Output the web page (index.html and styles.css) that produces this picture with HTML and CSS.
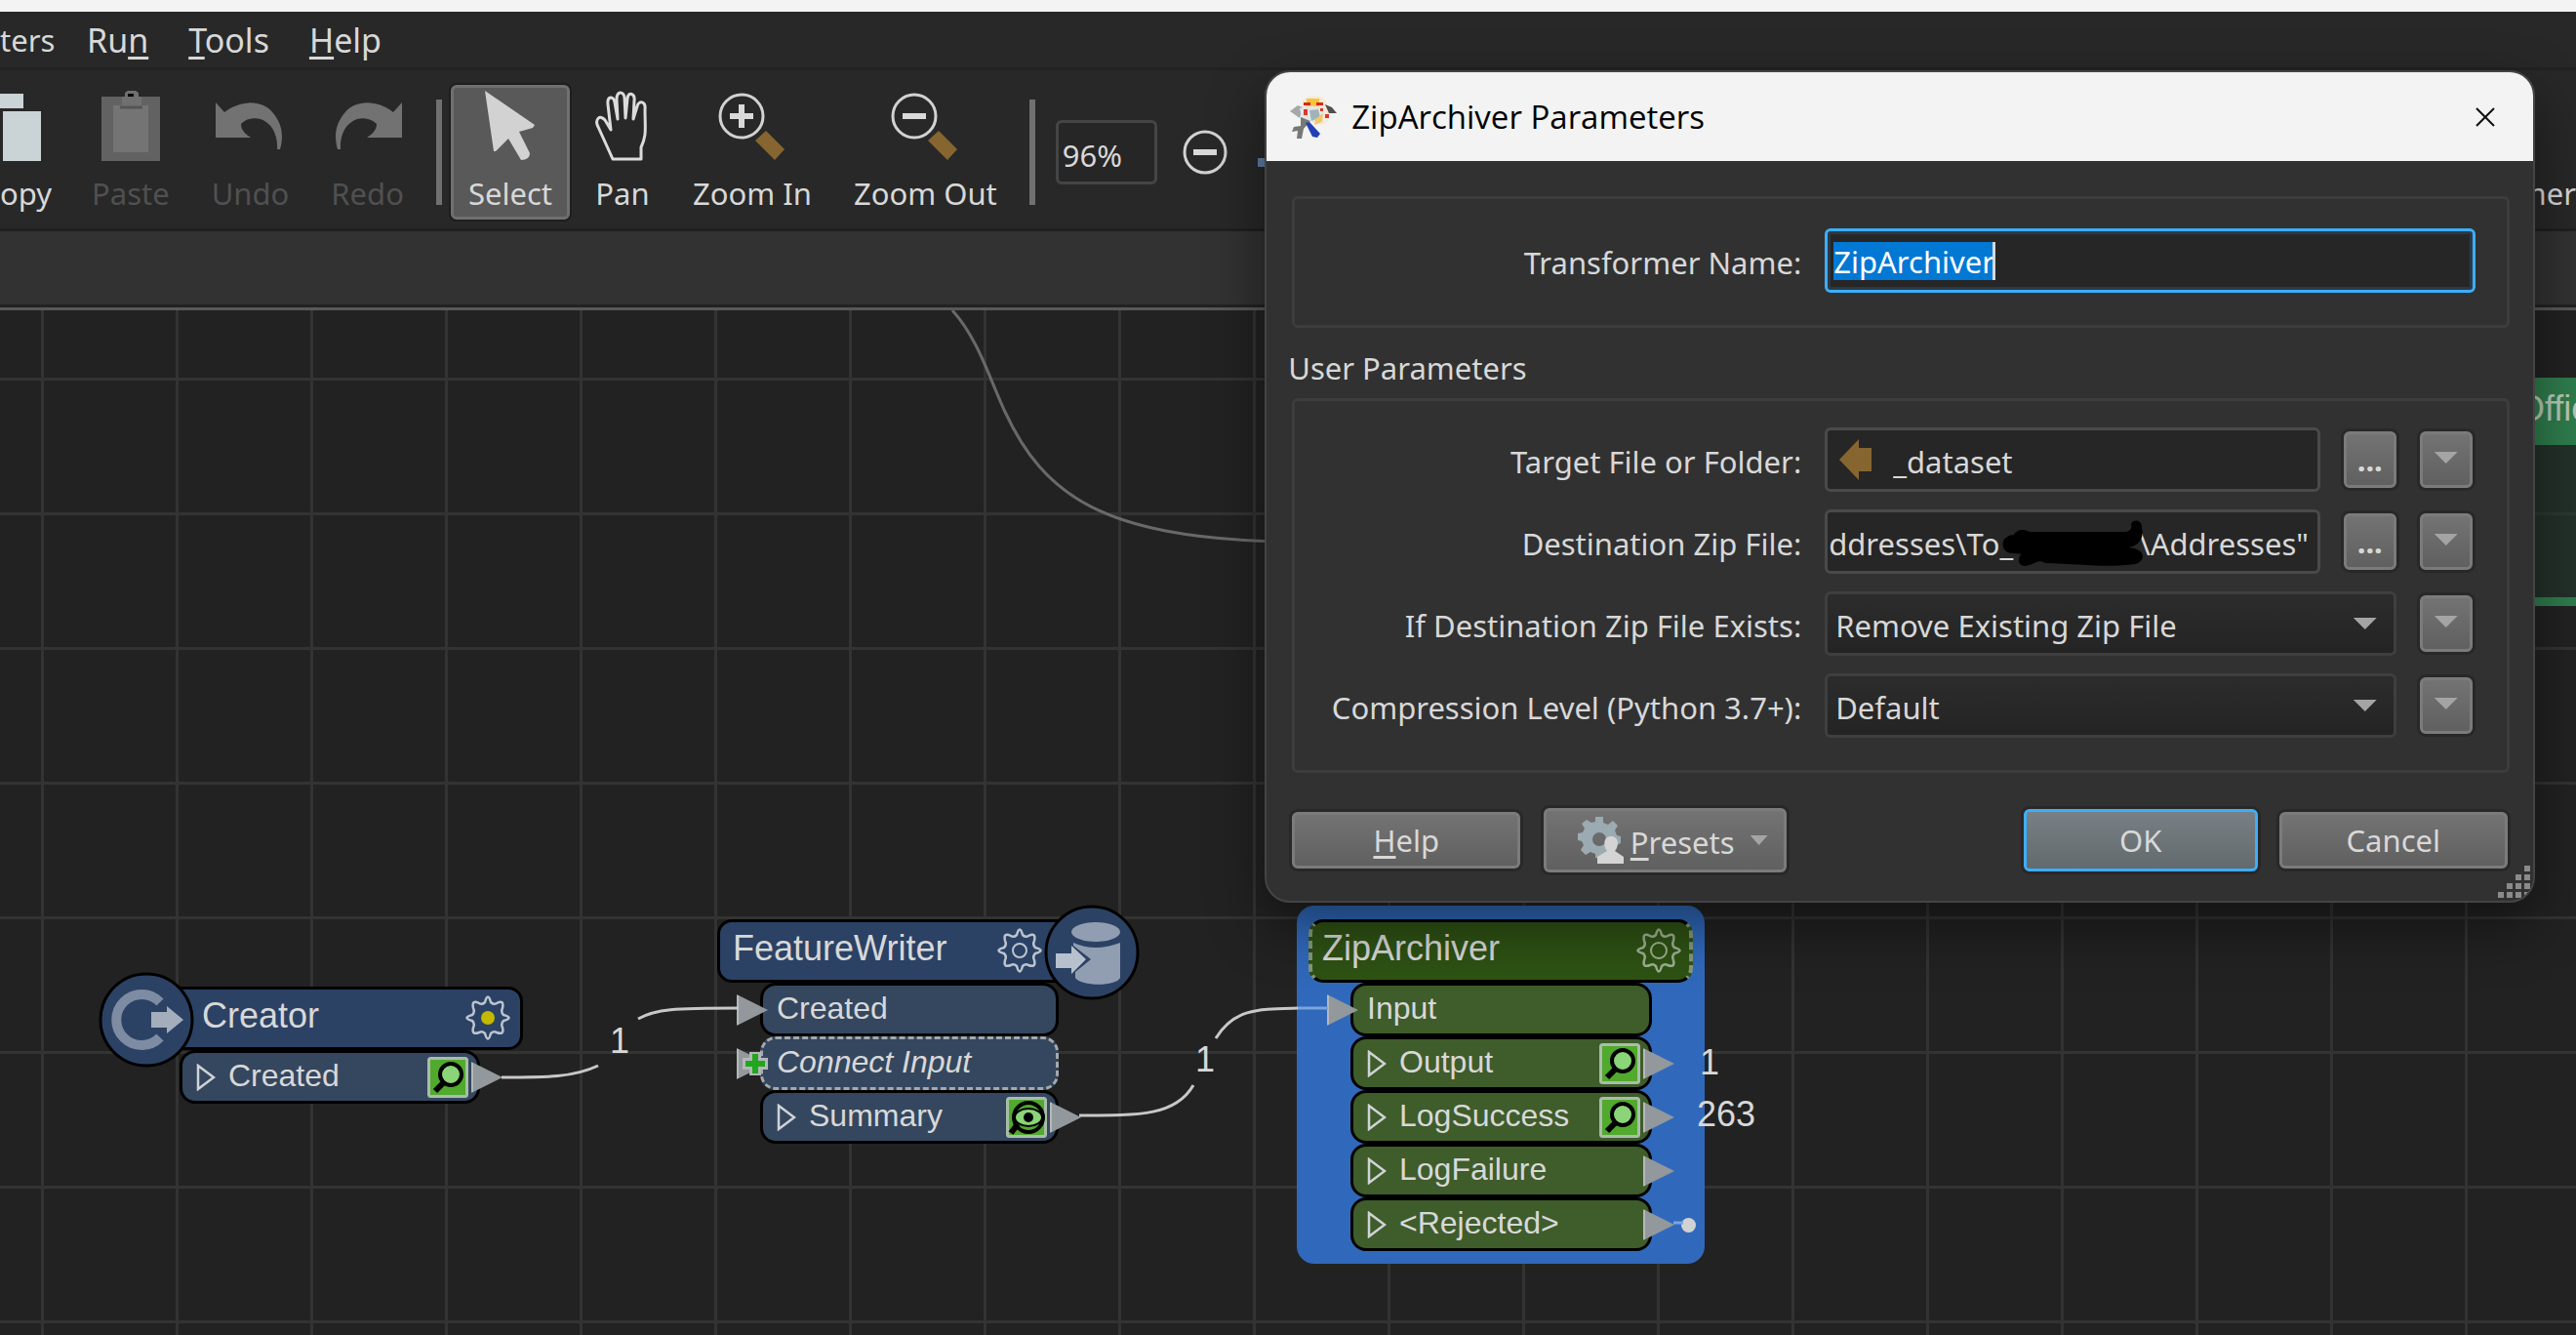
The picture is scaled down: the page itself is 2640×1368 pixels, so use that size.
FILE: index.html
```
<!DOCTYPE html>
<html lang="en">
<head>
<meta charset="UTF-8" />
<meta name="viewport" content="width=device-width, initial-scale=1" />
<title>ZipArchiver Parameters</title>
<link rel="stylesheet" href="styles.css">
</head>
<body>

<!-- shared icons -->
<svg class="sprite" aria-hidden="true">
  <symbol id="gear" viewBox="0 0 46 46">
    <path d="M20 7 Q23 -4 26 7 Q29 10 32 8 Q40 4 38 13 Q36 17 39 20 Q50 23 39 26 Q36 29 38 33 Q40 41 32 38 Q29 36 26 39 Q23 50 20 39 Q17 36 14 38 Q6 41 8 33 Q10 29 7 26 Q-4 23 7 20 Q10 17 8 13 Q6 4 14 8 Q17 10 20 7 Z" fill="none" stroke="currentColor" stroke-width="2.5" stroke-linejoin="round"/>
  </symbol>
  <symbol id="expand" viewBox="0 0 20 28">
    <path d="M2 2 L18 14 L2 26 Z" fill="none" stroke="#cfd3d6" stroke-width="2.5"/>
  </symbol>
  <symbol id="pin" viewBox="0 0 32 32">
    <path d="M0 0 L32 16 L0 32 Z" fill="#92989b"/>
    <path d="M1 1 V31" stroke="#b4b8ba" stroke-width="2"/>
  </symbol>
  <symbol id="inspect" viewBox="0 0 42 42">
    <rect x="1.5" y="1.5" width="39" height="39" rx="2" fill="#51a92d" stroke="#a9bda9" stroke-width="3"/>
    <path d="M18 25 L8 35" stroke="#000" stroke-width="6"/>
    <circle cx="24" cy="18" r="11" fill="#8bd478" stroke="#000" stroke-width="4"/>
  </symbol>
  <symbol id="inspect-eye" viewBox="0 0 42 42">
    <rect x="1.5" y="1.5" width="39" height="39" rx="2" fill="#51a92d" stroke="#a9bda9" stroke-width="3"/>
    <path d="M12 28 L5 37" stroke="#000" stroke-width="6"/>
    <circle cx="23" cy="21" r="15" fill="none" stroke="#000" stroke-width="4"/>
    <ellipse cx="23" cy="21" rx="14" ry="9" fill="#8bd478" stroke="#000" stroke-width="2"/>
    <circle cx="23" cy="21" r="5" fill="#000"/>
  </symbol>
  <symbol id="undo" viewBox="0 0 70 48">
    <path d="M0 0 L9 10 C24 -2 47 -4 59 11 C68 22 70 34 66 48 H63 C64 34 58 21 46 17 C38 15 31 17 26 22 C26 28 30 32 36 36 H0 Z" fill="currentColor"/>
  </symbol>
</svg>

<div class="window-edge"></div>

<nav class="menubar">
  <a href="#">ters</a>
  <a href="#">Ru<u>n</u></a>
  <a href="#"><u>T</u>ools</a>
  <a href="#"><u>H</u>elp</a>
</nav>

<div class="toolbar">
  <button class="tool first">
    <svg width="42" height="72"><path d="M0 3 H24 V18 H0 Z M3 21 H42 V72 H3 Z" fill="#cad3d6"/></svg>
    <span>opy</span>
  </button>
  <button class="tool" disabled>
    <svg width="60" height="72"><path d="M0 6 H60 V72 H0 Z" fill="#626262"/><path d="M12 15 H48 V63 H12 Z" fill="#747474"/><path d="M21 6 H24 V2 L27 0 H35 L38 2 V6 H41 V16 H21 Z" fill="#707070"/><path d="M19 17 H42" stroke="#555" stroke-width="3"/><path d="M27 3 H33 V6 H27 Z" fill="#000"/></svg>
    <span>Paste</span>
  </button>
  <button class="tool" disabled>
    <svg class="low" width="70" height="48"><use href="#undo"/></svg>
    <span>Undo</span>
  </button>
  <button class="tool" disabled>
    <svg class="low flip" width="70" height="48"><use href="#undo"/></svg>
    <span>Redo</span>
  </button>
  <div class="separator"></div>
  <button class="tool selected">
    <svg width="52" height="72"><path d="M0 0 L51 35 L49 38 L35 42 L46 64 Q46 71 37 71 L24 49 L11 62 L9 62 Z" fill="#d2d2d2"/></svg>
    <span>Select</span>
  </button>
  <button class="tool">
    <svg width="58" height="72" fill="none" stroke="#dcdcdc" stroke-width="3" stroke-linejoin="round"><path d="M19 70 L4 37 C0 29 6 24 11 30 L17 40 L14 14 C13 5 20 5 21 12 L24 29 L23 9 C23 0 30 0 31 7 L32 28 L34 8 C35 0 42 3 41 10 L40 29 L44 16 C46 9 53 11 52 19 C52 40 54 45 48 58 V70 Z"/></svg>
    <span>Pan</span>
  </button>
  <button class="tool">
    <svg width="72" height="72"><circle cx="25" cy="26" r="22" fill="none" stroke="#d2d2d2" stroke-width="3"/><path d="M25 14 V38 M13 26 H37" stroke="#d9d9d9" stroke-width="6"/><path d="M39 51 L50 41 L69 60 L59 71 Z" fill="#866530"/></svg>
    <span>Zoom In</span>
  </button>
  <button class="tool">
    <svg width="72" height="72"><circle cx="25" cy="26" r="22" fill="none" stroke="#d2d2d2" stroke-width="3"/><path d="M13 26 H37" stroke="#d9d9d9" stroke-width="6"/><path d="M39 51 L50 41 L69 60 L59 71 Z" fill="#866530"/></svg>
    <span>Zoom Out</span>
  </button>
  <div class="separator"></div>
  <input class="zoom-level" type="text" value="96%" aria-label="Zoom level">
  <button class="zoom-step" aria-label="Zoom out one step">
    <svg width="48" height="48"><circle cx="24" cy="24" r="21" fill="none" stroke="#d2d2d2" stroke-width="3"/><path d="M12 24 H36" stroke="#d9d9d9" stroke-width="6"/></svg>
  </button>
  <div class="zoom-track"></div>
  <button class="tool last"><span>mer</span></button>
</div>

<div class="tab-strip"></div>

<main class="canvas">
  <div class="bookmark">
    <div class="bookmark-title">Office</div>
  </div>

  <section class="node creator">
    <header>
      <svg class="badge badge-left" viewBox="0 0 98 98"><circle cx="49" cy="49" r="47" fill="#2b4265" stroke="#000" stroke-width="3"/><path d="M63 31 A26 26 0 1 0 63 67" fill="none" stroke="#7d8ba3" stroke-width="10"/><path d="M54 41 H70 V35 L87 49 L70 63 V57 H54 Z" fill="#a3adbb"/></svg>
      <span>Creator</span>
      <svg class="gear" viewBox="0 0 46 46"><use href="#gear"/><circle cx="23" cy="23" r="7" fill="#c4b800"/></svg>
    </header>
    <div class="port">
      <svg class="expand"><use href="#expand"/></svg>
      <span>Created</span>
      <svg class="inspect"><use href="#inspect"/></svg>
      <svg class="pin-out"><use href="#pin"/></svg>
    </div>
  </section>

  <section class="node writer">
    <header>
      <span>FeatureWriter</span>
      <svg class="gear" viewBox="0 0 46 46"><use href="#gear"/><circle cx="23" cy="23" r="7" fill="none" stroke="currentColor" stroke-width="2"/></svg>
      <svg class="badge badge-right" viewBox="0 0 98 98"><circle cx="49" cy="49" r="47" fill="#2b4265" stroke="#000" stroke-width="3"/><path d="M30 39 Q52 49 78 39 V75 C74 84 38 84 32 75 V69 L48 56 L30 42 Z" fill="#919eb1"/><ellipse cx="53" cy="28" rx="25" ry="10" fill="#919eb1"/><path d="M12 50 H28 V42 L43 56 L28 71 V65 H12 Z" fill="#b7c0cd"/></svg>
    </header>
    <div class="port">
      <svg class="pin-in"><use href="#pin"/></svg>
      <span>Created</span>
    </div>
    <div class="port optional">
      <svg class="pin-in" viewBox="0 0 32 32"><use href="#pin"/><path d="M19 4 V28 M6 16 H32" stroke="#b4b8ba" stroke-width="12"/><path d="M19 6 V26 M9 16 H29" stroke="#22a61c" stroke-width="6"/></svg>
      <span>Connect Input</span>
    </div>
    <div class="port">
      <svg class="expand"><use href="#expand"/></svg>
      <span>Summary</span>
      <svg class="inspect"><use href="#inspect-eye"/></svg>
      <svg class="pin-out"><use href="#pin"/></svg>
    </div>
  </section>

  <section class="node archiver">
    <header>
      <span>ZipArchiver</span>
      <svg class="gear" viewBox="0 0 46 46"><use href="#gear"/><circle cx="23" cy="23" r="8" fill="none" stroke="currentColor" stroke-width="2"/></svg>
    </header>
    <div class="port">
      <svg class="pin-in"><use href="#pin"/></svg>
      <span>Input</span>
    </div>
    <div class="port">
      <svg class="expand"><use href="#expand"/></svg>
      <span>Output</span>
      <svg class="inspect"><use href="#inspect"/></svg>
      <svg class="pin-out"><use href="#pin"/></svg>
    </div>
    <div class="port">
      <svg class="expand"><use href="#expand"/></svg>
      <span>LogSuccess</span>
      <svg class="inspect"><use href="#inspect"/></svg>
      <svg class="pin-out"><use href="#pin"/></svg>
    </div>
    <div class="port">
      <svg class="expand"><use href="#expand"/></svg>
      <span>LogFailure</span>
      <svg class="pin-out"><use href="#pin"/></svg>
    </div>
    <div class="port">
      <svg class="expand"><use href="#expand"/></svg>
      <span>&lt;Rejected&gt;</span>
      <svg class="pin-out"><use href="#pin"/></svg>
      <i class="stub"></i>
    </div>
  </section>

  <svg class="links" width="100%" height="100%" fill="none" stroke="#c8c8c8" stroke-width="3">
    <path stroke="#696969" d="M976 0 C1003 30 1014 70 1030 104 C1070 190 1130 232 1310 237"/>
    <path d="M514 786 C560 786 588 786 613 774"/>
    <path d="M654 726 C672 716 690 715 757 715"/>
    <path d="M1106 825 C1170 825 1205 825 1223 794"/>
    <path d="M1246 746 C1265 715 1290 716 1330 715"/>
    <path stroke="#7ba3dd" d="M1330 715 H1361 M1715 935 H1725"/>
  </svg>

  <span class="count count-creator">1</span>
  <span class="count count-summary">1</span>
  <span class="count count-output">1</span>
  <span class="count count-success">263</span>
</main>

<form class="dialog" role="dialog" aria-labelledby="dialog-title">
  <div class="titlebar">
    <svg class="app-icon" viewBox="0 0 48 48">
      <path d="M12 12 C10 0 38 -2 38 12 C42 20 42 32 30 32 L14 22 Z" fill="#f6ead6"/>
      <path d="M17 5 H30 V13 H17 Z" fill="#f7c53c"/>
      <path d="M14 9 H21 V12 H14 Z M27 9 H34 V12 H27 Z" fill="#d8271f"/>
      <path d="M0 18 L8 12 L13 14 L10 25 Z" fill="#a3a8aa"/>
      <path d="M36 11 L43 14 L48 20 L40 20 Z" fill="#4c5052"/>
      <path d="M10 15 Q22 10 36 15 L33 26 L24 29 L12 25 Z" fill="#e4e6e6"/>
      <path d="M14 16 H18 V22 H14 Z M31 15 H34 V18 H31 Z M36 21 H40 V25 H36 Z" fill="#d9392f"/>
      <path d="M20 17 L29 16 L31 24 L22 28 Z" fill="#9fb4b8"/>
      <path d="M26 26 L34 20 L33 29 L25 32 Z" fill="#efc96a"/>
      <path d="M11 24 L21 28 L14 36 L12 46 L7 46 L8 38 L2 39 L4 34 L11 33 Z" fill="#777974"/>
      <path d="M16 30 L20 29 L31 41 L28 45 L23 44 Z" fill="#2340b4"/>
    </svg>
    <h1 id="dialog-title">ZipArchiver Parameters</h1>
    <button type="button" class="close" aria-label="Close">
      <svg width="20" height="20"><path d="M1 1 L19 19 M19 1 L1 19" stroke="#111" stroke-width="2"/></svg>
    </button>
  </div>

  <div class="dialog-body">
    <div class="group name-group">
      <label for="name">Transformer Name:</label>
      <div class="field focused">
        <span class="caret-box"><input type="text" id="name" value="ZipArchiver"></span>
      </div>
    </div>

    <h2>User Parameters</h2>

    <div class="group">
      <label for="target">Target File or Folder:</label>
      <div class="field">
        <svg width="34" height="42"><path d="M0 21 L20 0 V9 H33 V33 H20 V42 Z" fill="#866530"/></svg>
        <input type="text" id="target" value="_dataset">
      </div>
      <button type="button" class="browse" aria-label="Browse target">...</button>
      <button type="button" class="more" aria-label="Target options"></button>

      <label for="dest">Destination Zip File:</label>
      <div class="field path">
        <input type="text" id="dest" value='ddresses\To_                \Addresses"'>
        <svg class="redacted" viewBox="0 0 146 48"><path d="M2 30 C-3 20 6 15 12 15 C16 8 24 10 28 12 H122 C132 13 133 8 132 4 C134 -2 144 0 143 8 C146 20 138 27 129 28 C147 29 148 42 136 45 C110 49 80 45 44 44 C36 39 32 47 22 47 C14 45 17 36 20 35 C14 33 6 36 2 30 Z"/></svg>
      </div>
      <button type="button" class="browse" aria-label="Browse destination">...</button>
      <button type="button" class="more" aria-label="Destination options"></button>

      <label for="exists">If Destination Zip File Exists:</label>
      <div class="select"><select id="exists"><option>Remove Existing Zip File</option></select></div>
      <button type="button" class="more" aria-label="Existing file options"></button>

      <label for="level">Compression Level (Python 3.7+):</label>
      <div class="select"><select id="level"><option>Default</option></select></div>
      <button type="button" class="more" aria-label="Compression options"></button>
    </div>

    <div class="actions">
      <button type="button"><u>H</u>elp</button>
      <button type="button" class="presets">
        <svg width="48" height="48"><path fill="#9caab1" fill-rule="evenodd" d="M18 0 H26 V6 L31 8 L36 4 L41 9 L38 14 L40 19 L44 20 V27 L40 29 L38 34 L30 42 H18 V38 L13 36 L8 39 L3 34 L6 29 L4 25 L0 24 V17 L5 16 L7 12 L4 7 L9 3 L14 6 L18 5 Z M22 16 A7 7 0 1 0 22 30 A7 7 0 1 0 22 16 Z"/><path fill="#d4d4d4" d="M34 20 C43 20 42 31 38 35 L47 41 V48 H20 V41 L30 35 C26 30 26 20 34 20 Z"/></svg>
        <span><u>P</u>resets</span>
      </button>
      <button type="button" class="ok">OK</button>
      <button type="button">Cancel</button>
    </div>
  </div>
  <svg class="grip" viewBox="0 0 34 34"><path d="M27 3 H33 M18 12 H24 M27 12 H33 M9 21 H15 M18 21 H24 M27 21 H33 M0 30 H6 M9 30 H15 M18 30 H24 M27 30 H33" stroke="#8a8a8a" stroke-width="6"/></svg>
</form>

</body>
</html>
```
FILE: styles.css
```
* { box-sizing: border-box; }
body {
  margin: 0; height: 100vh; overflow: hidden; position: relative;
  display: flex; flex-direction: column;
  background: #282828; color: #d8d8d8;
  font: 31px/40px "Noto Sans", "Open Sans", sans-serif;
}
button, input, select { font: inherit; color: inherit; margin: 0; }
u { text-decoration-thickness: 3px; text-underline-offset: 4px; }
.sprite { position: absolute; width: 0; height: 0; }
.window-edge { height: 12px; background: #f3f3f3; }

/* menu and toolbar */
.menubar {
  display: flex; gap: 41px; height: 60px; padding-top: 5px;
  border-bottom: 3px solid #222; font-size: 34px; line-height: 48px;
}
.menubar a { color: inherit; text-decoration: none; }
.menubar a:first-child { width: 50px; margin-right: -2px; font-size: 31px; }
.toolbar {
  display: flex; align-items: flex-start; gap: 7px;
  height: 165px; padding-top: 15px;
  border-bottom: 3px solid #1f1f1f;
}
.tool {
  flex: none; display: flex; flex-direction: column; align-items: center; justify-content: space-between;
  height: 138px; padding: 3px 15px 6px;
  background: none; border: 3px solid transparent; border-radius: 6px;
}
.tool span { line-height: 36px; }
.tool .low { margin: 12px 0; }
.tool:disabled { color: #505050; }
.tool:disabled svg { color: #727272; }
.tool.first { width: 69px; padding-left: 0; border-left: 0; align-items: flex-start; }
.tool.selected { background: #595959; border-color: #707070; box-shadow: 0 0 0 2px #1e1e1e; }
.tool.last { margin-left: auto; padding-right: 0; border-right: 0; justify-content: flex-end; }
.flip { transform: scaleX(-1); }
.separator { flex: none; width: 6px; height: 108px; margin: 15px 2px 0 8px; background: #707070; }
.zoom-level {
  width: 104px; height: 66px; margin: 36px 0 0 12px; padding: 6px 4px 0;
  background: #262626; border: 3px solid #454545; border-radius: 6px;
}
.zoom-step { display: flex; margin: 45px 0 0 18px; padding: 0; background: none; border: 0; }
.zoom-track { width: 60px; height: 9px; margin: 75px 0 0 23px; background: #607ea6; }
.tab-strip { height: 81px; background: #323232; border-bottom: 3px solid #585858; box-shadow: inset 0 -3px #222; }

/* workspace */
.canvas {
  flex: 1; position: relative; overflow: hidden;
  background-color: #222;
  background-image: linear-gradient(#333 3px, transparent 3px), linear-gradient(90deg, #333 3px, transparent 3px);
  background-size: 138px 138px;
  background-position: 42px 69px;
  font-family: "Liberation Sans", Arial, sans-serif;
}
.links { position: absolute; left: 0; top: 0; }
.bookmark {
  position: absolute; right: 0; top: 69px; width: 120px; height: 234px;
  background: rgba(36, 64, 48, .5); border-bottom: 9px solid #2f7d4d;
}
.bookmark-title {
  height: 69px; padding: 8px 0 0 60px; background: #2f7d4d; color: #b9c9b5;
  font-size: 36px; line-height: 48px;
}
.node { position: absolute; }
.node header {
  position: relative; display: flex; align-items: center; height: 65px; padding: 0 13px 4px;
  background: #2b4265; border: 3px solid #000; border-radius: 15px;
  font-size: 36px; color: #d8d8d8;
}
.node header span { padding-bottom: 2px; }
.gear { width: 46px; height: 46px; margin: 3px 0 0 auto; color: #bcc4ce; }
.badge { position: absolute; top: -18px; width: 98px; height: 98px; }
.badge-left { left: -53px; }
.badge-right { right: -50px; }
.port {
  position: relative; display: flex; align-items: center; gap: 13px;
  height: 55px; padding: 0 9px 0 14px;
  background: #34475f; border: 3px solid #000; border-radius: 16px;
  font-size: 32px;
}
.port span { padding-bottom: 3px; }
.expand { width: 20px; height: 28px; }
.inspect { width: 42px; height: 42px; margin-left: auto; }
.pin-in, .pin-out { position: absolute; top: 9px; width: 32px; height: 32px; }
.pin-in { left: -27px; }
.pin-out { right: -26px; }
.optional { border: 3px dashed #a4a9ad; font-style: italic; }
.creator { left: 151px; top: 693px; width: 385px; }
.creator header { padding-left: 53px; padding-right: 10px; }
.creator .port { width: 308px; margin-left: 33px; }
.writer { left: 735px; top: 624px; width: 386px; }
.writer .gear { margin-right: 37px; }
.writer .port { width: 306px; margin-left: 44px; }
.archiver {
  left: 1329px; top: 610px; width: 418px; padding: 14px 12px 13px;
  background: #3069bb; border-radius: 18px;
}
.archiver header {
  padding: 0 8px 4px 10px;
  background: #2e5214; border-left: 4px dashed #84987c; border-right: 4px dashed #84987c;
}
.archiver .gear { color: #9fb08f; }
.archiver .port { width: 309px; margin-left: 43px; background: #3f5c2b; }
.stub { position: absolute; right: -48px; top: 18px; width: 15px; height: 15px; border-radius: 50%; background: #d2d2d2; }
.count { position: absolute; font-size: 36px; line-height: 40px; }
.count-creator { left: 625px; top: 729px; }
.count-summary { left: 1225px; top: 748px; }
.count-output { left: 1742px; top: 751px; }
.count-success { left: 1739px; top: 804px; }

/* parameter dialog */
.dialog {
  position: absolute; left: 49.1%; right: 1.6%; top: 72px; overflow: hidden;
  background: #313131; border: 2px solid #444; border-radius: 26px;
  box-shadow: 0 24px 60px rgba(0, 0, 0, .45);
}
.titlebar {
  display: flex; align-items: center; height: 91px; padding: 0 39px 0 24px;
  background: #f3f3f3; color: #000;
}
.app-icon { width: 48px; height: 48px; }
.titlebar h1 { margin: 0 auto 0 15px; font: 33px/44px "Open Sans", "Noto Sans", sans-serif; }
.close { display: flex; padding: 0; border: 0; background: none; }
.dialog-body { padding: 36px 24px 29px 26px; }
.group {
  display: grid; grid-template-columns: 519px 1fr 54px 54px; align-items: center; gap: 18px 24px;
  padding: 27px 35px 33px 0; border: 3px solid #3d3d3d; border-radius: 6px;
}
.name-group { padding: 30px 32px 33px 0; }
.group label { padding-top: 4px; text-align: right; }
.dialog h2 { margin: 21px 0 11px -4px; font-size: 31px; font-weight: normal; }
.field {
  position: relative; display: flex; align-items: center; height: 66px; padding-left: 12px;
  background: #262626; border: 3px solid #4a4a4a; border-radius: 6px;
}
.field input { flex: 1; min-width: 0; width: 100%; padding: 4px 0 0 21px; border: 0; outline: 0; background: none; }
.focused { grid-column: 2 / -1; padding-left: 6px; border-color: #3daefa; box-shadow: inset 0 0 0 3px #2a3a47; }
.focused .caret-box { display: flex; width: 166px; height: 39px; background: #0078d4; border-right: 3px solid #d8d8d8; color: #fff; }
.focused input { padding: 2px 0 0; }
.path { padding-left: 1px; }
.path input { padding: 4px 0 0; }
.redacted { position: absolute; left: 179px; top: 8px; width: 146px; height: 48px; }
.select { position: relative; grid-column: 2 / 4; }
.select select {
  appearance: none; display: block; width: 100%; height: 66px; padding: 4px 40px 0 8px; outline: 0;
  background: linear-gradient(#2c2c2c, #242424); border: 3px solid #3f3f3f; border-radius: 6px;
}
.select::after, .more::after, .presets::after {
  content: ""; display: block; width: 24px; height: 12px;
  background: #a4a4a4; clip-path: polygon(0 0, 100% 0, 50% 100%);
}
.select::after { position: absolute; right: 20px; top: 27px; }
.browse, .more, .actions button {
  height: 58px; padding: 0; background: linear-gradient(#737373, #606060);
  border: 3px solid #7b7b7b; border-radius: 6px; box-shadow: 0 0 0 3px #282828;
}
.browse { font-weight: bold; }
.more { display: flex; justify-content: center; padding-top: 18px; align-items: flex-start; }
.actions { display: flex; align-items: center; gap: 22px; margin: 36px 2px 0 0; }
.actions button { width: 234px; }
.actions .presets {
  display: flex; align-items: center; justify-content: center; gap: 6px; width: 249px; height: 66px; margin-left: 2px; padding-left: 15px;
}
.presets span { padding-top: 4px; }
.presets::after { margin-left: 10px; width: 18px; height: 10px; }
.actions .ok {
  width: 240px; height: 64px; margin-left: auto;
  background: linear-gradient(#798085, #626a6d); border-color: #3daefa;
}
.grip { position: absolute; right: 2px; bottom: 2px; width: 34px; height: 34px; }
```
